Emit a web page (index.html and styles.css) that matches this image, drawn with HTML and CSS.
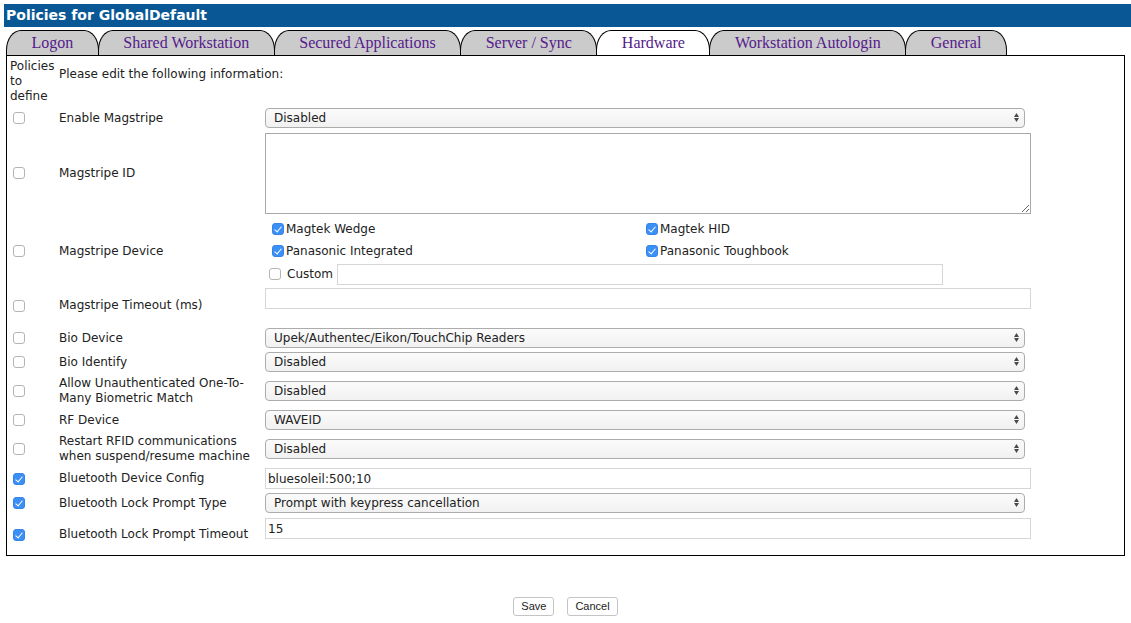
FILE: index.html
```html
<!DOCTYPE html>
<html lang="en">
<head>
<meta charset="utf-8">
<title>Policies for GlobalDefault</title>
<link rel="stylesheet" href="styles.css">
</head>
<body>
<div class="titlebar">Policies for GlobalDefault</div>
<nav class="tabs">
  <a class="tab">Logon</a>
  <a class="tab">Shared Workstation</a>
  <a class="tab">Secured Applications</a>
  <a class="tab">Server / Sync</a>
  <a class="tab active">Hardware</a>
  <a class="tab">Workstation Autologin</a>
  <a class="tab">General</a>
</nav>
<div class="panel">
  <div class="row head">
    <div class="define">Policies to define</div>
    <div class="intro">Please edit the following information:</div>
  </div>

  <div class="row h24">
    <div class="c1"><input type="checkbox" class="cb"></div>
    <label class="lbl">Enable Magstripe</label>
    <div class="ctl"><div class="sel"><select><option>Disabled</option></select><svg class="arr" width="5" height="9" viewBox="0 0 5 9"><path d="M2.5 0L5 4H0z M0 5h5L2.5 9z" fill="#4a4a4a"/></svg></div></div>
  </div>

  <div class="row h86">
    <div class="c1"><input type="checkbox" class="cb"></div>
    <label class="lbl">Magstripe ID</label>
    <div class="ctl"><textarea class="ta"></textarea></div>
  </div>

  <div class="row h69">
    <div class="c1"><input type="checkbox" class="cb"></div>
    <label class="lbl">Magstripe Device</label>
    <div class="ctl devices">
      <label class="opt"><input type="checkbox" class="cb" checked>Magtek Wedge</label>
      <label class="opt"><input type="checkbox" class="cb" checked>Magtek HID</label>
      <label class="opt"><input type="checkbox" class="cb" checked>Panasonic Integrated</label>
      <label class="opt"><input type="checkbox" class="cb" checked>Panasonic Toughbook</label>
      <div class="custom"><label class="opt plain"><input type="checkbox" class="cb">Custom</label><input type="text" class="txt custom-in"></div>
    </div>
  </div>

  <div class="row h41">
    <div class="c1"><input type="checkbox" class="cb"></div>
    <label class="lbl">Magstripe Timeout (ms)</label>
    <div class="ctl top"><input type="text" class="txt"></div>
  </div>

  <div class="row h24">
    <div class="c1"><input type="checkbox" class="cb"></div>
    <label class="lbl">Bio Device</label>
    <div class="ctl"><div class="sel"><select><option>Upek/Authentec/Eikon/TouchChip Readers</option></select><svg class="arr" width="5" height="9" viewBox="0 0 5 9"><path d="M2.5 0L5 4H0z M0 5h5L2.5 9z" fill="#4a4a4a"/></svg></div></div>
  </div>

  <div class="row h24">
    <div class="c1"><input type="checkbox" class="cb"></div>
    <label class="lbl">Bio Identify</label>
    <div class="ctl"><div class="sel"><select><option>Disabled</option></select><svg class="arr" width="5" height="9" viewBox="0 0 5 9"><path d="M2.5 0L5 4H0z M0 5h5L2.5 9z" fill="#4a4a4a"/></svg></div></div>
  </div>

  <div class="row h34">
    <div class="c1"><input type="checkbox" class="cb"></div>
    <label class="lbl">Allow Unauthenticated One-To-Many Biometric Match</label>
    <div class="ctl"><div class="sel"><select><option>Disabled</option></select><svg class="arr" width="5" height="9" viewBox="0 0 5 9"><path d="M2.5 0L5 4H0z M0 5h5L2.5 9z" fill="#4a4a4a"/></svg></div></div>
  </div>

  <div class="row h24">
    <div class="c1"><input type="checkbox" class="cb"></div>
    <label class="lbl">RF Device</label>
    <div class="ctl"><div class="sel"><select><option>WAVEID</option></select><svg class="arr" width="5" height="9" viewBox="0 0 5 9"><path d="M2.5 0L5 4H0z M0 5h5L2.5 9z" fill="#4a4a4a"/></svg></div></div>
  </div>

  <div class="row h34">
    <div class="c1"><input type="checkbox" class="cb"></div>
    <label class="lbl">Restart RFID communications when suspend/resume machine</label>
    <div class="ctl"><div class="sel"><select><option>Disabled</option></select><svg class="arr" width="5" height="9" viewBox="0 0 5 9"><path d="M2.5 0L5 4H0z M0 5h5L2.5 9z" fill="#4a4a4a"/></svg></div></div>
  </div>

  <div class="row h26">
    <div class="c1"><input type="checkbox" class="cb" checked></div>
    <label class="lbl">Bluetooth Device Config</label>
    <div class="ctl"><input type="text" class="txt" value="bluesoleil:500;10"></div>
  </div>

  <div class="row h24">
    <div class="c1"><input type="checkbox" class="cb" checked></div>
    <label class="lbl">Bluetooth Lock Prompt Type</label>
    <div class="ctl"><div class="sel"><select><option>Prompt with keypress cancellation</option></select><svg class="arr" width="5" height="9" viewBox="0 0 5 9"><path d="M2.5 0L5 4H0z M0 5h5L2.5 9z" fill="#4a4a4a"/></svg></div></div>
  </div>

  <div class="row h39">
    <div class="c1"><input type="checkbox" class="cb" checked></div>
    <label class="lbl">Bluetooth Lock Prompt Timeout</label>
    <div class="ctl top"><input type="text" class="txt" value="15"></div>
  </div>
</div>
<div class="actions">
  <button class="btn">Save</button>
  <button class="btn">Cancel</button>
</div>
</body>
</html>
```

FILE: styles.css
```css
html, body {
  margin: 0;
  padding: 0;
  background: #fff;
}
body {
  font-family: "DejaVu Sans", Verdana, sans-serif;
  font-size: 12px;
  color: #222;
}
.titlebar {
  margin: 4px 0 0 4px;
  height: 23px;
  line-height: 23px;
  padding-left: 2px;
  background: #095895;
  color: #fff;
  font-weight: bold;
  font-size: 14px;
}
.tabs {
  display: flex;
  margin-top: 3px;
  padding-left: 6px;
  height: 25px;
}
.tab {
  display: block;
  height: 24px;
  line-height: 24px;
  padding: 0 24.5px;
  margin-right: -1px;
  border: 1px solid #000;
  border-bottom: none;
  border-radius: 15px 15px 0 0 / 20px 20px 0 0;
  background: #cbcbcb;
  color: #551a8b;
  font-family: "Liberation Serif", "Times New Roman", serif;
  font-size: 16px;
  white-space: nowrap;
}
.tab.active {
  background: #fff;
}
.panel {
  margin: 0 6px;
  border: 1px solid #000;
  padding: 2px 0 1px 3px;
}
.row {
  display: grid;
  grid-template-columns: 49px 206px 766px;
  align-items: center;
}
.row.head {
  height: 48px;
  align-items: start;
}
.define {
  line-height: 15px;
  padding-top: 1px;
}
.intro {
  grid-column: 2 / 4;
  padding-top: 9px;
}
.h24 { height: 24px; }
.h26 { height: 25px; }
.h34 { height: 34px; }
.h39 { height: 39px; }
.h41 { height: 41px; }
.h69 { height: 69px; }
.h86 { height: 86px; }
.c1 {
  display: flex;
  align-items: center;
}
.lbl {
  line-height: 15px;
  padding-right: 4px;
}
.ctl {
  display: flex;
  align-items: center;
}
.ctl.top {
  align-self: start;
  padding-top: 3px;
}
.cb {
  appearance: none;
  -webkit-appearance: none;
  width: 12px;
  height: 12px;
  margin: 0 0 0 3px;
  border: 1px solid #b4b4b4;
  border-radius: 3px;
  background: #fff;
  position: relative;
  flex: none;
}
.cb:checked {
  background: #3b8ff5;
  border-color: #3585e8;
}
.cb:checked::after {
  content: "";
  position: absolute;
  left: 3px;
  top: 1px;
  width: 3px;
  height: 6px;
  border: solid #fff;
  border-width: 0 1.5px 1.5px 0;
  transform: rotate(40deg);
}
.sel {
  position: relative;
  width: 760px;
}
.sel select {
  appearance: none;
  -webkit-appearance: none;
  display: block;
  width: 760px;
  height: 20px;
  margin: 0;
  padding: 0 8px;
  border: 1px solid #acacac;
  border-radius: 4px;
  background: linear-gradient(#fbfbfb, #f1f1f1);
  font-family: "DejaVu Sans", Verdana, sans-serif;
  font-size: 12px;
  color: #222;
}
.arr {
  position: absolute;
  right: 6px;
  top: 5px;
}
.txt {
  box-sizing: border-box;
  width: 766px;
  height: 21px;
  margin: 0;
  padding: 0 2px;
  border: 1px solid #d6d6d6;
  background: #fff;
  font-family: "DejaVu Sans", Verdana, sans-serif;
  font-size: 12px;
  color: #222;
  outline: none;
}
.ta {
  box-sizing: border-box;
  width: 766px;
  height: 81px;
  margin: 0;
  border: 1px solid #a9a9a9;
  font-family: "DejaVu Sans", Verdana, sans-serif;
  font-size: 12px;
}
.devices {
  display: grid;
  grid-template-columns: 374px 300px;
  grid-template-rows: 22px 22px 24px;
  align-items: center;
  align-self: start;
  padding-top: 2px;
  padding-left: 4px;
}
.opt {
  display: flex;
  align-items: center;
  gap: 2px;
  white-space: nowrap;
}
.opt.plain {
  gap: 6px;
  margin-left: -3px;
}
.custom {
  grid-column: 1 / 3;
  display: flex;
  align-items: center;
  gap: 4px;
}
.custom-in {
  width: 606px;
}
.actions {
  display: flex;
  justify-content: center;
  gap: 13px;
  margin-top: 41px;
}
.btn {
  height: 19px;
  padding: 0 7px;
  margin: 0;
  border: 1px solid #c4c4c4;
  border-radius: 3px;
  background: #fff;
  font-family: "Liberation Sans", Arial, sans-serif;
  font-size: 11px;
  color: #222;
  line-height: 17px;
}
```
